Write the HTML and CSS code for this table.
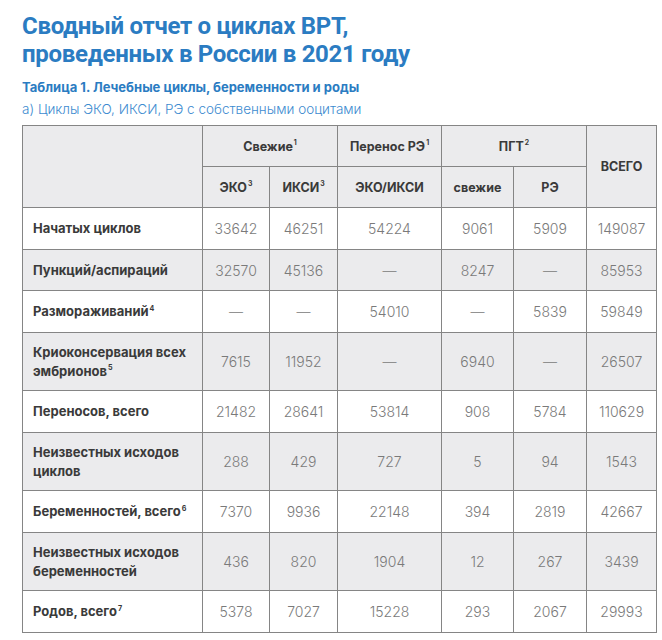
FILE: index.html
```html
<!DOCTYPE html>
<html lang="ru">
<head>
<meta charset="utf-8">
<link rel="stylesheet" href="styles.css">
</head>
<body>
<div class="page">
  <h1 class="title">Сводный отчет о циклах ВРТ,<br>проведенных в России в 2021 году</h1>
  <div class="subtitle">Таблица 1. Лечебные циклы, беременности и роды</div>
  <div class="caption">а) Циклы ЭКО, ИКСИ, РЭ с собственными ооцитами</div>
  <table class="data">
    <colgroup>
      <col class="c-label"><col class="c-eko"><col class="c-iksi"><col class="c-pe"><col class="c-pgt1"><col class="c-pgt2"><col class="c-total">
    </colgroup>
    <thead>
      <tr class="h1">
        <th rowspan="2"></th>
        <th colspan="2">Свежие<sup>1</sup></th>
        <th>Перенос РЭ<sup>1</sup></th>
        <th colspan="2">ПГТ<sup>2</sup></th>
        <th rowspan="2">ВСЕГО</th>
      </tr>
      <tr class="h2">
        <th>ЭКО<sup>3</sup></th>
        <th>ИКСИ<sup>3</sup></th>
        <th>ЭКО/ИКСИ</th>
        <th>свежие</th>
        <th>РЭ</th>
      </tr>
    </thead>
    <tbody>
      <tr class="w"><td class="lbl">Начатых циклов</td><td>33642</td><td>46251</td><td>54224</td><td>9061</td><td>5909</td><td>149087</td></tr>
      <tr class="g"><td class="lbl">Пункций/аспираций</td><td>32570</td><td>45136</td><td>—</td><td>8247</td><td>—</td><td>85953</td></tr>
      <tr class="w"><td class="lbl">Размораживаний<sup>4</sup></td><td>—</td><td>—</td><td>54010</td><td>—</td><td>5839</td><td>59849</td></tr>
      <tr class="g tall"><td class="lbl">Криоконсервация всех эмбрионов<sup>5</sup></td><td>7615</td><td>11952</td><td>—</td><td>6940</td><td>—</td><td>26507</td></tr>
      <tr class="w"><td class="lbl">Переносов, всего</td><td>21482</td><td>28641</td><td>53814</td><td>908</td><td>5784</td><td>110629</td></tr>
      <tr class="g tall"><td class="lbl">Неизвестных исходов циклов</td><td>288</td><td>429</td><td>727</td><td>5</td><td>94</td><td>1543</td></tr>
      <tr class="w"><td class="lbl">Беременностей, всего<sup>6</sup></td><td>7370</td><td>9936</td><td>22148</td><td>394</td><td>2819</td><td>42667</td></tr>
      <tr class="g tall"><td class="lbl">Неизвестных исходов беременностей</td><td>436</td><td>820</td><td>1904</td><td>12</td><td>267</td><td>3439</td></tr>
      <tr class="w"><td class="lbl">Родов, всего<sup>7</sup></td><td>5378</td><td>7027</td><td>15228</td><td>293</td><td>2067</td><td>29993</td></tr>
    </tbody>
  </table>
</div>
</body>
</html>
```

FILE: styles.css
```css
* { box-sizing: border-box; }
html, body { margin: 0; padding: 0; background: #fff; }
body { font-family: "Inter", "Roboto", sans-serif; }
.page { padding: 12px 0 0 22px; }
.title {
  margin: 0;
  font-family: "Roboto", "Inter", sans-serif;
  font-size: 24px;
  line-height: 28px;
  font-weight: 700;
  letter-spacing: -0.3px;
  color: #2b7cc2;
}
.subtitle {
  margin-top: 10px;
  font-size: 13px;
  line-height: 18px;
  font-weight: 700;
  color: #2b7cc2;
}
.caption {
  margin-top: 4px;
  font-size: 13.5px;
  line-height: 18px;
  font-weight: 300;
  color: #3d8bd0;
}
.data {
  margin-top: 7px;
  border-collapse: collapse;
  table-layout: fixed;
  width: 634px;
}
.c-label { width: 180px; }
.c-eko { width: 67px; }
.c-iksi { width: 68px; }
.c-pe { width: 104px; }
.c-pgt1 { width: 72px; }
.c-pgt2 { width: 73px; }
.c-total { width: 70px; }
.data th, .data td {
  border: 1px solid #858585;
  padding: 0;
  text-align: center;
  vertical-align: middle;
}
.data th {
  background: #ebebed;
  font-size: 12.5px;
  font-weight: 700;
  color: #3a3a3a;
}
.h1 th, .h2 th { height: 41px; }
.data td {
  font-size: 14px;
  font-weight: 300;
  color: #7a7a7a;
  height: 41px;
}
.data tr.w td { height: 42px; }
.data tr.tall td { height: 58px; }
.data tr.g td { background: #ebebed; }
.data tr.w td { background: #fff; }
.data td.lbl {
  text-align: left;
  padding: 0 12px 0 10px;
  font-size: 13px;
  font-weight: 700;
  color: #3a3a3a;
  line-height: 19px;
}
sup {
  font-size: 0.55em;
  line-height: 1;
  vertical-align: baseline;
  position: relative;
  top: -0.75em;
  margin-left: 1px;
}
```
